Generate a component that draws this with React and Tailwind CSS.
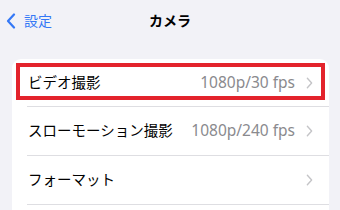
import React from 'react';

const rows = [
  { label: 'ビデオ撮影', value: '1080p/30 fps', highlight: true },
  { label: 'スローモーション撮影', value: '1080p/240 fps' },
  { label: 'フォーマット', value: '' },
  { label: '', value: '' },
];

const Chevron = ({ className }) => (
  <svg viewBox="0 0 8 14" className={className} fill="none" stroke="currentColor" strokeWidth="1.6" strokeLinecap="round" strokeLinejoin="round">
    <path d="M1.5 1.5 L6.5 7 L1.5 12.5" />
  </svg>
);

export default function App() {
  return (
    <div
      className="w-[340px] h-[210px] overflow-hidden bg-[#f2f2f7]"
      style={{ fontFamily: '"Noto Sans", "Noto Sans CJK JP", sans-serif' }}
    >
      {/* Nav bar */}
      <div className="relative h-[42px] flex items-center">
        <div className="flex items-center pl-[6px] text-[#3478f6]">
          <svg viewBox="0 0 10 16" className="w-[10px] h-[16px]" fill="none" stroke="currentColor" strokeWidth="2.2" strokeLinecap="round" strokeLinejoin="round">
            <path d="M8 1.5 L2 8 L8 14.5" />
          </svg>
          <span className="ml-[8px] text-[14px] leading-none">設定</span>
        </div>
        <div className="absolute inset-0 flex items-center justify-center pointer-events-none">
          <span className="text-[14px] font-bold text-black leading-none">カメラ</span>
        </div>
      </div>

      {/* Settings list */}
      <div className="mt-[17px] ml-[12px] w-[317px] bg-white rounded-[9px] overflow-hidden">
        {rows.map((row, i) => (
          <div key={i} className="relative">
            <div className={`flex items-center pl-[16px] pr-[16px] ${i === 0 ? 'h-[47px]' : 'h-[48px]'}`}>
              <span className="text-[14.5px] text-black flex-1">{row.label}</span>
              {row.value && <span className="text-[15.5px] text-[#8a8a8e] mr-[11px]">{row.value}</span>}
              {row.label && <Chevron className="w-[7px] h-[12px] text-[#c4c4c7]" />}
            </div>
            <div className="ml-[15px] h-px bg-[#dedee2]" />
            {row.highlight && (
              <div className="absolute left-[4px] top-[4px] w-[309px] h-[37px] border-[4px] border-[#e3232c]" />
            )}
          </div>
        ))}
      </div>
    </div>
  );
}
